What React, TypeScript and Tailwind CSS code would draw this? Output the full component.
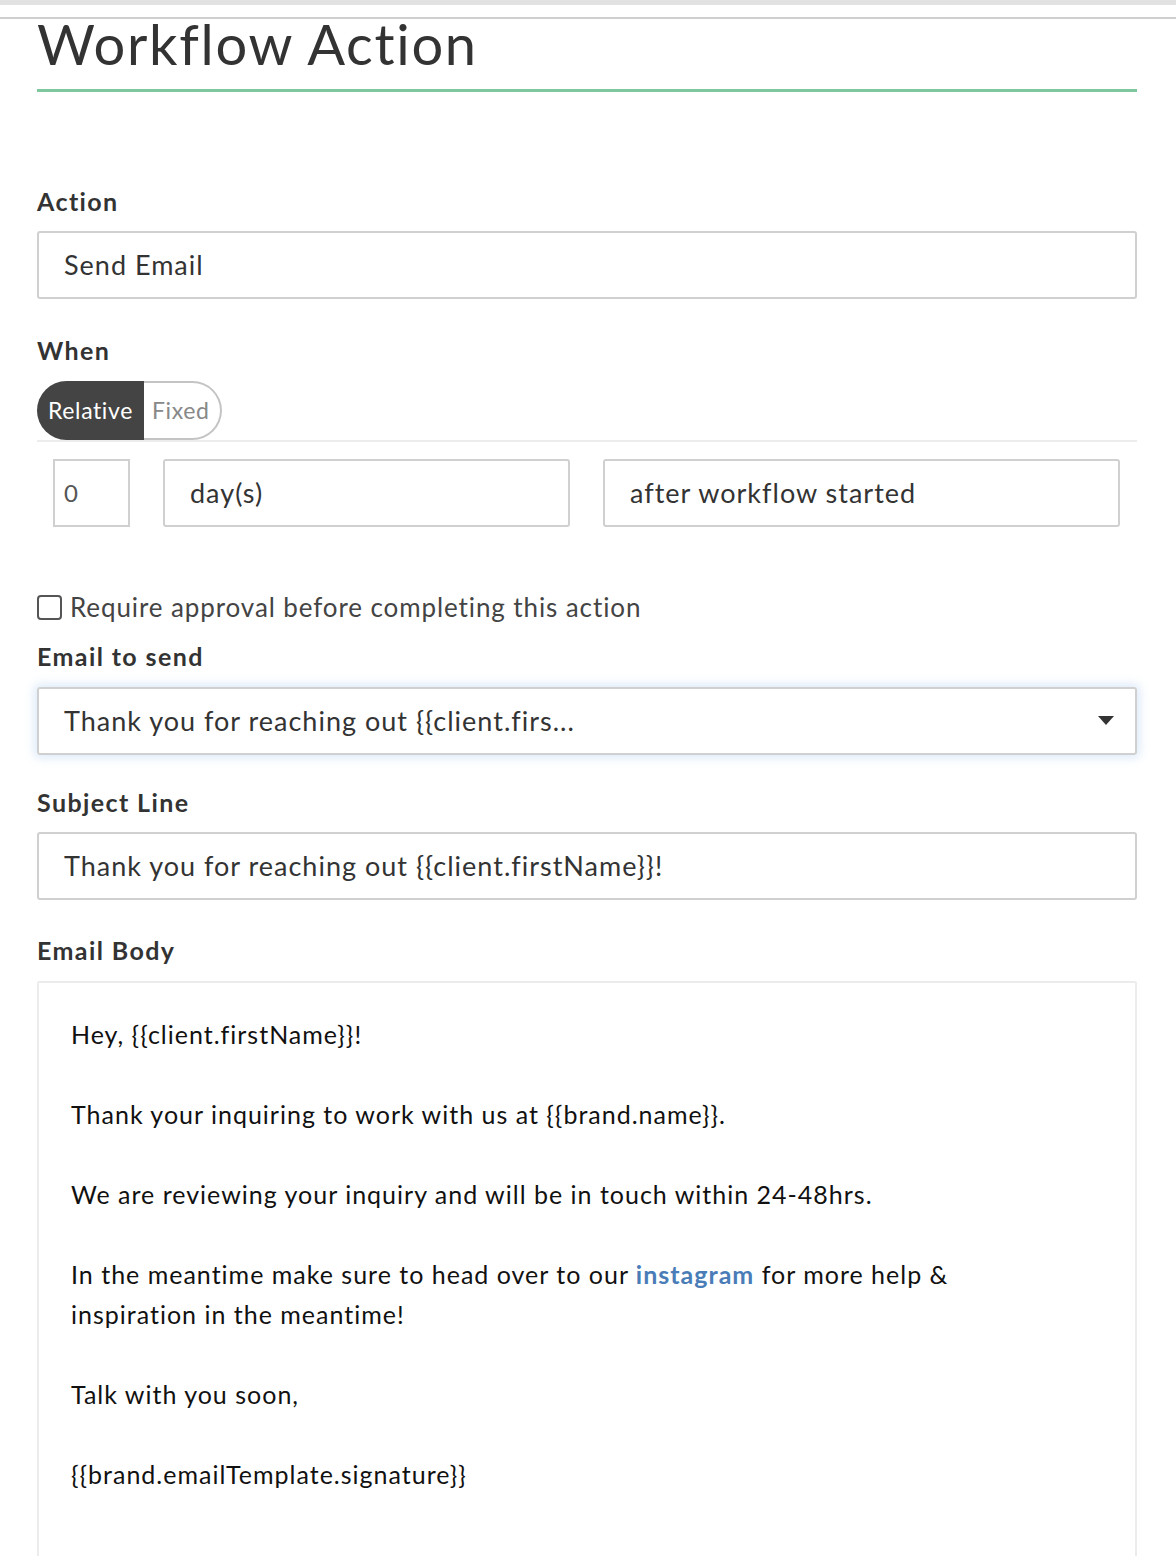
import React from "react";

const font = { fontFamily: "Lato, 'Open Sans', sans-serif" };

function Label({ children }: { children: React.ReactNode }) {
  return <div className="text-[25px] font-bold text-[#333] leading-[30px] tracking-[1.4px]">{children}</div>;
}

const inputCls =
  "h-[68px] border-2 border-[#d0d0d0] rounded-[3px] flex items-center px-[25px] text-[27px] tracking-[1px] text-[#333]";

export default function App() {
  return (
    <div className="min-h-[1556px] bg-white overflow-hidden" style={font}>
      <div className="h-[5px] bg-[#e2e2e2]" />
      <div className="h-[12px]" />
      <div className="h-[2px] bg-[#cfcfcf]" />
      <div className="ml-[37px] w-[1100px]">
        <h1 className="text-[56px] leading-[56px] font-normal text-[#333] -mt-[3px] tracking-[1.7px]">Workflow Action</h1>
        <div className="h-[3px] bg-[#7fc79d] mt-[17px]" />

        <div className="mt-[94px]">
          <Label>Action</Label>
          <div className={"mt-[15px] " + inputCls}>Send Email</div>
        </div>

        <div className="mt-[36px]">
          <Label>When</Label>
          <div className="mt-[16px] flex">
            <div className="h-[59px] w-[107px] justify-center bg-[#444] text-white rounded-l-[30px] flex items-center text-[23px] tracking-[0.6px]">Relative</div>
            <div className="h-[59px] w-[78px] pl-[8px] border-2 border-l-0 border-[#c4c4c4] text-[#888] rounded-r-[30px] flex items-center text-[23px] tracking-[0.6px]">Fixed</div>
          </div>
          <div className="h-[2px] bg-[#ececec]" />
          <div className="flex mt-[17px] pl-[16px] pr-[17px] gap-[33px]">
            <div className="w-[77px] h-[68px] border-2 border-[#d0d0d0] flex items-center px-[9px] text-[24px] text-[#555]">0</div>
            <div className={"w-[407px] " + inputCls}>day(s)</div>
            <div className={"flex-1 " + inputCls}>after workflow started</div>
          </div>
        </div>

        <label className="mt-[63px] flex items-center gap-[8px] text-[26px] text-[#444] leading-[34px] tracking-[0.9px]">
          <span className="w-[25px] h-[25px] border-2 border-[#555] rounded-[4px] bg-white shrink-0" />
          Require approval before completing this action
        </label>

        <div className="mt-[17px]">
          <Label>Email to send</Label>
          <div className={"mt-[16px] justify-between pr-[21px] border-[#c8c8c8] shadow-[0_0_10px_3px_rgba(120,170,230,0.25)] " + inputCls}>
            <span>Thank you for reaching out {"{{client.firs..."}</span>
            <svg width="16" height="10" viewBox="0 0 16 10"><path d="M0 0h16L8 9z" fill="#333" /></svg>
          </div>
        </div>

        <div className="mt-[32px]">
          <Label>Subject Line</Label>
          <div className={"mt-[15px] " + inputCls}>Thank you for reaching out {"{{client.firstName}}!"}</div>
        </div>

        <div className="mt-[35px]">
          <Label>Email Body</Label>
          <div className="mt-[16px] h-[620px] border-2 border-[#ececec] rounded-[2px] pl-[32px] pr-[40px] pt-[31px] text-[25px] leading-[40px] tracking-[1px] text-[#111]">
            <p>Hey, {"{{client.firstName}}!"}</p>
            <p className="mt-[40px]">Thank your inquiring to work with us at {"{{brand.name}}."}</p>
            <p className="mt-[40px]">We are reviewing your inquiry and will be in touch within 24-48hrs.</p>
            <p className="mt-[40px]">
              In the meantime make sure to head over to our <span className="text-[#4a7db8] font-bold">instagram</span> for more help &amp;
              <br />
              inspiration in the meantime!
            </p>
            <p className="mt-[40px]">Talk with you soon,</p>
            <p className="mt-[40px]">{"{{brand.emailTemplate.signature}}"}</p>
          </div>
        </div>
      </div>
    </div>
  );
}
